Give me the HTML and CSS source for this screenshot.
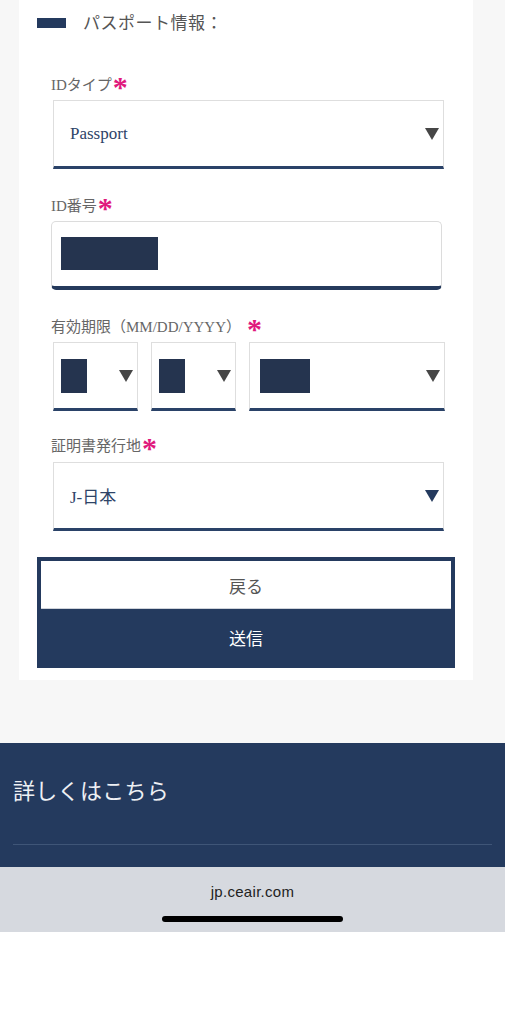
FILE: index.html
```html
<!DOCTYPE html>
<html lang="ja">
<head>
<meta charset="utf-8">
<link rel="stylesheet" href="styles.css">
</head>
<body>
<main class="page">
  <section class="card">
    <div class="section-head">
      <span class="marker"></span>
      <h2 class="section-title">パスポート情報：</h2>
    </div>

    <div class="field field-first">
      <label class="label">IDタイプ<span class="req">*</span></label>
      <div class="select select-wide">
        <span class="value">Passport</span>
        <span class="caret"></span>
      </div>
    </div>

    <div class="field">
      <label class="label">ID番号<span class="req">*</span></label>
      <div class="input">
        <span class="redact redact-id"></span>
      </div>
    </div>

    <div class="field">
      <label class="label">有効期限（MM/DD/YYYY）<span class="req req-gap">*</span></label>
      <div class="date-row">
        <div class="select select-sm"><span class="redact redact-sm"></span><span class="caret"></span></div>
        <div class="select select-sm"><span class="redact redact-sm"></span><span class="caret"></span></div>
        <div class="select select-year"><span class="redact redact-yr"></span><span class="caret"></span></div>
      </div>
    </div>

    <div class="field field-last">
      <label class="label">証明書発行地<span class="req">*</span></label>
      <div class="select select-wide">
        <span class="value">J-日本</span>
        <span class="caret caret-navy"></span>
      </div>
    </div>

    <div class="btn-group">
      <button class="btn btn-back">戻る</button>
      <button class="btn btn-submit">送信</button>
    </div>
  </section>

  <footer class="footer">
    <h3 class="footer-title">詳しくはこちら</h3>
    <hr class="footer-rule">
  </footer>

  <div class="browser-bar">
    <div class="url">jp.ceair.com</div>
    <div class="home-indicator"></div>
  </div>
</main>
</body>
</html>
```

FILE: styles.css
```css
* { box-sizing: border-box; }

html, body {
  margin: 0;
  padding: 0;
  background: #ffffff;
}

body {
  font-family: "Liberation Serif", "Noto Sans CJK JP", serif;
  color: #555;
}

.page {
  display: flex;
  flex-direction: column;
  width: 505px;
}

.card {
  background: #f7f7f7;
  padding: 0 32px 63px 19px;
  display: flex;
  flex-direction: column;
}

.section-head,
.field,
.btn-group {
  background: #fff;
}

.card > * {
  width: 454px;
}

.section-head {
  display: flex;
  align-items: center;
  padding: 12px 18px 0 18px;
  height: 36px;
}

.marker {
  width: 29px;
  height: 10px;
  background: #243a5e;
  margin-right: 17px;
  margin-top: -2px;
}

.section-title {
  margin: 0;
  font-size: 17px;
  font-weight: normal;
  line-height: 24px;
  color: #555;
  letter-spacing: 0.5px;
}

.field {
  display: flex;
  flex-direction: column;
  padding: 27px 13px 0 32px;
}

.field-first { padding-top: 39px; }
.field-last { padding-top: 25px; }

.label {
  display: block;
  font-size: 15px;
  line-height: 20px;
  height: 20px;
  color: #666;
  margin-bottom: 5px;
  white-space: nowrap;
}

.field-last .label { margin-bottom: 6px; }

.req {
  display: inline-block;
  color: #e0197d;
  font-weight: bold;
  font-size: 30px;
  line-height: 20px;
  height: 20px;
  font-family: "Liberation Serif", serif;
  vertical-align: top;
  position: relative;
  top: 2px;
  margin-left: 1px;
}

.req-gap { margin-left: 6px; }

.select {
  display: flex;
  align-items: center;
  justify-content: space-between;
  height: 69px;
  background: #fff;
  border: 1px solid #dedede;
  border-bottom: 3px solid #2a4268;
  padding: 0 4px 0 16px;
  margin-left: 2px;
}

.select-wide { width: 391px; }

.value {
  font-size: 17px;
  color: #2e4468;
}

.caret {
  width: 0;
  height: 0;
  border-left: 7.5px solid transparent;
  border-right: 7.5px solid transparent;
  border-top: 12px solid #464646;
}

.caret-navy { border-top-color: #243a5e; }

.input {
  display: flex;
  align-items: center;
  width: 391px;
  height: 69px;
  border: 1px solid #dcdcdc;
  border-bottom: 4px solid #253a5c;
  border-radius: 5px;
  padding: 0 0 0 9px;
  background: #fff;
}

.redact {
  display: block;
  background: #25344f;
}

.redact-id { width: 97px; height: 33px; margin-top: -1px; }
.redact-sm { width: 26px; height: 34px; }
.redact-yr { width: 50px; height: 34px; }

.date-row {
  display: flex;
  gap: 13px;
  margin-left: 2px;
}

.date-row .select {
  margin-left: 0;
  padding: 0 4px 0 7px;
}

.select-sm { width: 85px; }
.date-row .select-year { width: 196px; padding-left: 10px; }

.btn-group {
  display: flex;
  flex-direction: column;
  padding: 26px 18px 12px 18px;
}

.btn {
  display: block;
  width: 418px;
  margin: 0;
  font-family: "Liberation Serif", "Noto Sans CJK JP", serif;
  font-size: 17px;
  cursor: pointer;
}

.btn-back {
  height: 52px;
  background: #fff;
  color: #555;
  border: 4px solid #243a5e;
  border-bottom: 0;
  box-shadow: inset 0 -1px 0 #cfd3da;
  padding: 0;
}

.btn-submit {
  height: 59px;
  background: #243a5e;
  color: #fff;
  border: 0;
  padding: 0 0 2px;
}

.footer {
  background: #243a5e;
  height: 124px;
  padding: 34px 13px 0 13px;
}

.footer-title {
  margin: 0;
  font-size: 22px;
  font-weight: normal;
  line-height: 30px;
  color: #eef0f4;
  letter-spacing: 0.3px;
}

.footer-rule {
  margin: 37px 0 0;
  border: 0;
  border-top: 1px solid #3f5577;
  height: 0;
}

.browser-bar {
  background: #d6d9df;
  height: 65px;
  display: flex;
  flex-direction: column;
  align-items: center;
}

.url {
  font-family: "Liberation Sans", "Noto Sans", sans-serif;
  font-size: 15px;
  color: #222;
  line-height: 20px;
  margin-top: 15px;
  letter-spacing: 0.3px;
}

.home-indicator {
  width: 181px;
  height: 6px;
  border-radius: 3px;
  background: #000;
  margin-top: 14px;
}
```
